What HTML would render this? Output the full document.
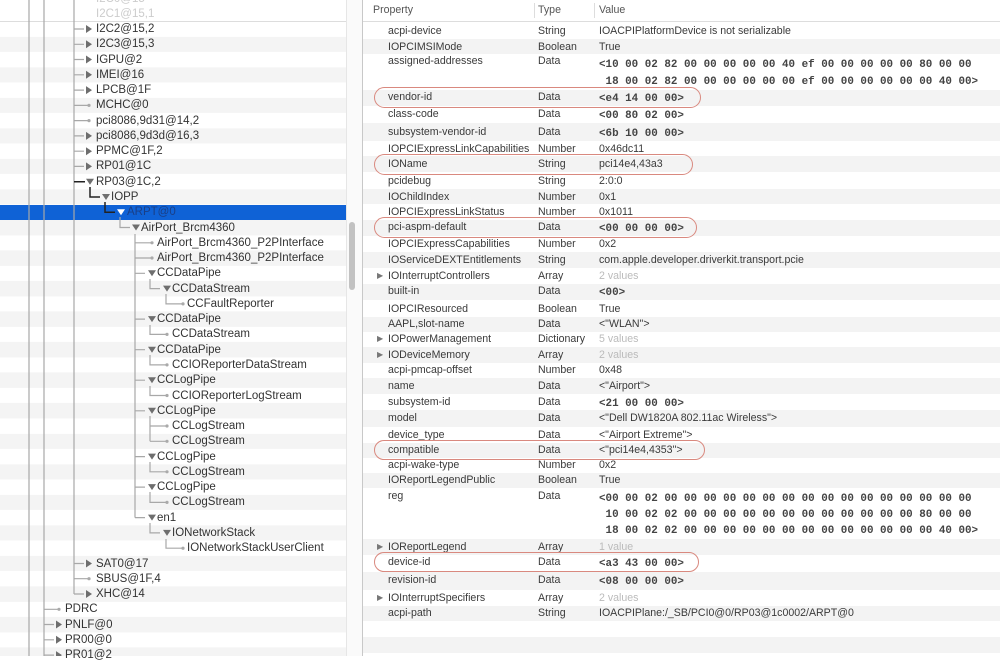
<!DOCTYPE html>
<html><head><meta charset="utf-8"><style>
*{margin:0;padding:0;box-sizing:border-box}
body{width:1000px;height:656px;overflow:hidden;background:#fff;position:relative;font-family:"Liberation Sans",sans-serif;font-size:11.5px;color:#333}
.t{position:absolute;line-height:14px;white-space:pre}
#left{position:absolute;left:0;top:0;width:346px;height:656px;background:repeating-linear-gradient(#fff 0,#fff 15.27px,#f4f4f4 15.27px,#f4f4f4 30.54px);background-position:0 21.4px}
#right{position:absolute;left:362px;top:0;width:638px;height:656px;background:#fff;border-left:1px solid #c8c8c8}
.b{position:absolute;left:0;width:638px}
.g{background:#f3f3f3}
.m{font-family:"Liberation Mono",monospace;font-size:10.9px;font-weight:bold;color:#444}
.o{position:absolute;border:1.5px solid #d9897f;border-radius:11px}
.f{color:#bbb}
svg{position:absolute;left:0;top:0}
</style></head><body>
<div id="left"></div>
<div style="position:absolute;left:0;top:0;width:346px;height:22px;background:#fff;border-bottom:1px solid #ddd"></div>
<div style="position:absolute;left:0;top:204.6px;width:346px;height:15.3px;background:#0f62d6"></div>
<div style="position:absolute;left:346px;top:0;width:16px;height:656px;background:#fafafa;border-left:1px solid #e6e6e6"></div>
<div style="position:absolute;left:349px;top:222px;width:6px;height:68px;background:#c2c2c2;border-radius:3px"></div>
<svg width="362" height="656">
<g stroke="#a8a8a8" stroke-width="1.2" fill="none">
<line x1="29" y1="0" x2="29" y2="656"/><line x1="44" y1="0" x2="44" y2="656"/>
<line x1="74" y1="0" x2="74" y2="594"/>
<line x1="135" y1="234" x2="135" y2="517.6"/>
<path d="M74 29h10M74 44.3h10M74 59.5h10M74 74.8h10M74 90.1h10M74 105.4h14M74 120.6h14M74 135.9h10M74 151.2h10M74 166.4h10M74 563.5h10M74 578.7h14M74 594h10"/>
<path d="M44 609.3h14M44 624.5h10M44 639.8h10M44 655.1h10"/>
<path d="M120 217v10.5h10"/>
<path d="M135 242.8h16M135 258h16M135 273.3h10M135 319.1h10M135 349.7h10M135 380.2h10M135 410.8h10M135 456.6h10M135 487.1h10M135 517.6h10"/>
<path d="M150 279v9.6h10M150 325v9.4h16M150 355v9.9h16M150 386v9.5h16M150 416v25.3M150 426h16M150 441.3h16M150 462v9.8h16M150 492v10.4h16M150 523v9.9h10"/>
<path d="M166 294v9.9h16M166 539v9.2h16"/>
</g>
<g stroke="#222" stroke-width="1.5" fill="none"><path d="M74 181.7h11M90 187v10h10M105 202v10.2h10"/></g>
<g fill="#aaa"><circle cx="89" cy="105.4" r="1.6"/><circle cx="89" cy="120.6" r="1.6"/><circle cx="89" cy="578.7" r="1.6"/><circle cx="59" cy="609.3" r="1.6"/><circle cx="152" cy="242.8" r="1.6"/><circle cx="152" cy="258" r="1.6"/><circle cx="167" cy="334.4" r="1.6"/><circle cx="167" cy="364.9" r="1.6"/><circle cx="167" cy="395.5" r="1.6"/><circle cx="167" cy="426" r="1.6"/><circle cx="167" cy="441.3" r="1.6"/><circle cx="167" cy="471.8" r="1.6"/><circle cx="167" cy="502.4" r="1.6"/><circle cx="183" cy="303.9" r="1.6"/><circle cx="183" cy="548.2" r="1.6"/></g>
<g fill="#6e6e6e">
<path d="M86 25l6 4-6 4zM86 40.3l6 4-6 4zM86 55.5l6 4-6 4zM86 70.8l6 4-6 4zM86 86.1l6 4-6 4zM86 131.9l6 4-6 4zM86 147.2l6 4-6 4zM86 162.4l6 4-6 4zM86 559.5l6 4-6 4zM86 590l6 4-6 4z"/>
<path d="M56 620.5l6 4-6 4zM56 635.8l6 4-6 4zM56 651.1l6 4-6 4z"/>
<path d="M86 178.7h8l-4 6zM102 194h8l-4 6zM132 224.5h8l-4 6zM148 270.3h8l-4 6zM148 316.1h8l-4 6zM148 346.7h8l-4 6zM148 377.2h8l-4 6zM148 407.8h8l-4 6zM148 453.6h8l-4 6zM148 484.1h8l-4 6zM148 514.6h8l-4 6zM163 285.6h8l-4 6zM163 529.9h8l-4 6z"/>
</g>
<path d="M117 209.2h8l-4 6z" fill="#fff"/>
</svg>
<div class="t" style="left:96px;top:-8px;color:#ccc">I2C0@15</div>
<div class="t" style="left:96px;top:7px;color:#ccc">I2C1@15,1</div>
<div class="t" style="left:96px;top:22px">I2C2@15,2</div>
<div class="t" style="left:96px;top:37.3px">I2C3@15,3</div>
<div class="t" style="left:96px;top:52.5px">IGPU@2</div>
<div class="t" style="left:96px;top:67.8px">IMEI@16</div>
<div class="t" style="left:96px;top:83.1px">LPCB@1F</div>
<div class="t" style="left:96px;top:98.4px">MCHC@0</div>
<div class="t" style="left:96px;top:113.6px">pci8086,9d31@14,2</div>
<div class="t" style="left:96px;top:128.9px">pci8086,9d3d@16,3</div>
<div class="t" style="left:96px;top:144.2px">PPMC@1F,2</div>
<div class="t" style="left:96px;top:159.4px">RP01@1C</div>
<div class="t" style="left:96px;top:174.7px">RP03@1C,2</div>
<div class="t" style="left:111px;top:190px">IOPP</div>
<div class="t" style="left:127px;top:205.2px;color:#1a3f86">ARPT@0</div>
<div class="t" style="left:141px;top:220.5px">AirPort_Brcm4360</div>
<div class="t" style="left:157px;top:235.8px">AirPort_Brcm4360_P2PInterface</div>
<div class="t" style="left:157px;top:251px">AirPort_Brcm4360_P2PInterface</div>
<div class="t" style="left:157px;top:266.3px">CCDataPipe</div>
<div class="t" style="left:172px;top:281.6px">CCDataStream</div>
<div class="t" style="left:187px;top:296.9px">CCFaultReporter</div>
<div class="t" style="left:157px;top:312.1px">CCDataPipe</div>
<div class="t" style="left:172px;top:327.4px">CCDataStream</div>
<div class="t" style="left:157px;top:342.7px">CCDataPipe</div>
<div class="t" style="left:172px;top:357.9px">CCIOReporterDataStream</div>
<div class="t" style="left:157px;top:373.2px">CCLogPipe</div>
<div class="t" style="left:172px;top:388.5px">CCIOReporterLogStream</div>
<div class="t" style="left:157px;top:403.8px">CCLogPipe</div>
<div class="t" style="left:172px;top:419px">CCLogStream</div>
<div class="t" style="left:172px;top:434.3px">CCLogStream</div>
<div class="t" style="left:157px;top:449.6px">CCLogPipe</div>
<div class="t" style="left:172px;top:464.8px">CCLogStream</div>
<div class="t" style="left:157px;top:480.1px">CCLogPipe</div>
<div class="t" style="left:172px;top:495.4px">CCLogStream</div>
<div class="t" style="left:157px;top:510.6px">en1</div>
<div class="t" style="left:172px;top:525.9px">IONetworkStack</div>
<div class="t" style="left:187px;top:541.2px">IONetworkStackUserClient</div>
<div class="t" style="left:96px;top:556.5px">SAT0@17</div>
<div class="t" style="left:96px;top:571.7px">SBUS@1F,4</div>
<div class="t" style="left:96px;top:587px">XHC@14</div>
<div class="t" style="left:65px;top:602.3px">PDRC</div>
<div class="t" style="left:65px;top:617.5px">PNLF@0</div>
<div class="t" style="left:65px;top:632.8px">PR00@0</div>
<div class="t" style="left:65px;top:648.1px">PR01@2</div>

<div id="right">
<div class="b" style="top:0;height:22px;border-bottom:1px solid #ddd"></div>
<div style="position:absolute;left:171px;top:3px;width:1px;height:15px;background:#ddd"></div>
<div style="position:absolute;left:231px;top:3px;width:1px;height:15px;background:#ddd"></div>
<div class="b g" style="top:38.5px;height:15.5px"></div>
<div class="b g" style="top:90px;height:15.5px"></div>
<div class="b g" style="top:123px;height:17.5px"></div>
<div class="b g" style="top:156px;height:16px"></div>
<div class="b g" style="top:189px;height:15px"></div>
<div class="b g" style="top:219.5px;height:16px"></div>
<div class="b g" style="top:252px;height:16px"></div>
<div class="b g" style="top:283.5px;height:16.5px"></div>
<div class="b g" style="top:316.5px;height:15px"></div>
<div class="b g" style="top:347px;height:15.5px"></div>
<div class="b g" style="top:378px;height:16px"></div>
<div class="b g" style="top:410px;height:16.5px"></div>
<div class="b g" style="top:442.5px;height:15px"></div>
<div class="b g" style="top:472.5px;height:15.5px"></div>
<div class="b g" style="top:539px;height:15.5px"></div>
<div class="b g" style="top:571.5px;height:18px"></div>
<div class="b g" style="top:605.5px;height:15.5px"></div>
<div class="b g" style="top:637px;height:15.5px"></div>
</div>
<div style="position:absolute;left:363px;top:0;width:637px;height:656px;color:#3a3a3a;font-size:10.6px">
<div class="t" style="left:10px;top:3px;color:#555">Property</div>
<div class="t" style="left:175px;top:3px;color:#555">Type</div>
<div class="t" style="left:236px;top:3px;color:#555">Value</div>
</div>
<div style="position:absolute;left:0;top:0;width:1000px;height:656px;font-size:10.6px;color:#3a3a3a">
<div class="t" style="left:388px;top:24px">acpi-device</div><div class="t" style="left:538px;top:24px">String</div><div class="t" style="left:599px;top:24px">IOACPIPlatformDevice is not serializable</div>
<div class="t" style="left:388px;top:39.7px">IOPCIMSIMode</div><div class="t" style="left:538px;top:39.7px">Boolean</div><div class="t" style="left:599px;top:39.7px">True</div>
<div class="t" style="left:388px;top:54px">assigned-addresses</div><div class="t" style="left:538px;top:54px">Data</div><div class="t m" style="left:599px;top:57px;line-height:17px">&lt;10 00 02 82 00 00 00 00 00 40 ef 00 00 00 00 00 80 00 00
 18 00 02 82 00 00 00 00 00 00 ef 00 00 00 00 00 00 40 00&gt;</div>
<div class="t" style="left:388px;top:90px">vendor-id</div><div class="t" style="left:538px;top:90px">Data</div><div class="t m" style="left:599px;top:92px">&lt;e4 14 00 00&gt;</div>
<div class="t" style="left:388px;top:107px">class-code</div><div class="t" style="left:538px;top:107px">Data</div><div class="t m" style="left:599px;top:109px">&lt;00 80 02 00&gt;</div>
<div class="t" style="left:388px;top:124.5px">subsystem-vendor-id</div><div class="t" style="left:538px;top:124.5px">Data</div><div class="t m" style="left:599px;top:126.5px">&lt;6b 10 00 00&gt;</div>
<div class="t" style="left:388px;top:141.5px">IOPCIExpressLinkCapabilities</div><div class="t" style="left:538px;top:142px">Number</div><div class="t" style="left:599px;top:141.5px">0x46dc11</div>
<div class="t" style="left:388px;top:157px">IOName</div><div class="t" style="left:538px;top:157px">String</div><div class="t" style="left:599px;top:157px">pci14e4,43a3</div>
<div class="t" style="left:388px;top:174px">pcidebug</div><div class="t" style="left:538px;top:174px">String</div><div class="t" style="left:599px;top:174px">2:0:0</div>
<div class="t" style="left:388px;top:190px">IOChildIndex</div><div class="t" style="left:538px;top:190px">Number</div><div class="t" style="left:599px;top:190px">0x1</div>
<div class="t" style="left:388px;top:205px">IOPCIExpressLinkStatus</div><div class="t" style="left:538px;top:205px">Number</div><div class="t" style="left:599px;top:205px">0x1011</div>
<div class="t" style="left:388px;top:220px">pci-aspm-default</div><div class="t" style="left:538px;top:220px">Data</div><div class="t m" style="left:599px;top:222px">&lt;00 00 00 00&gt;</div>
<div class="t" style="left:388px;top:237px">IOPCIExpressCapabilities</div><div class="t" style="left:538px;top:237px">Number</div><div class="t" style="left:599px;top:237px">0x2</div>
<div class="t" style="left:388px;top:253px">IOServiceDEXTEntitlements</div><div class="t" style="left:538px;top:253px">String</div><div class="t" style="left:599px;top:253px">com.apple.developer.driverkit.transport.pcie</div>
<div class="t" style="left:377px;top:269px;color:#777;font-size:8px">▶</div><div class="t" style="left:388px;top:269px">IOInterruptControllers</div><div class="t" style="left:538px;top:269px">Array</div><div class="t f" style="left:599px;top:269px">2 values</div>
<div class="t" style="left:388px;top:284px">built-in</div><div class="t" style="left:538px;top:284px">Data</div><div class="t m" style="left:599px;top:286px">&lt;00&gt;</div>
<div class="t" style="left:388px;top:302px">IOPCIResourced</div><div class="t" style="left:538px;top:302px">Boolean</div><div class="t" style="left:599px;top:302px">True</div>
<div class="t" style="left:388px;top:317px">AAPL,slot-name</div><div class="t" style="left:538px;top:317px">Data</div><div class="t" style="left:599px;top:317px">&lt;"WLAN"&gt;</div>
<div class="t" style="left:377px;top:332px;color:#777;font-size:8px">▶</div><div class="t" style="left:388px;top:332px">IOPowerManagement</div><div class="t" style="left:538px;top:332px">Dictionary</div><div class="t f" style="left:599px;top:332px">5 values</div>
<div class="t" style="left:377px;top:348px;color:#777;font-size:8px">▶</div><div class="t" style="left:388px;top:348px">IODeviceMemory</div><div class="t" style="left:538px;top:348px">Array</div><div class="t f" style="left:599px;top:348px">2 values</div>
<div class="t" style="left:388px;top:363px">acpi-pmcap-offset</div><div class="t" style="left:538px;top:363px">Number</div><div class="t" style="left:599px;top:363px">0x48</div>
<div class="t" style="left:388px;top:379px">name</div><div class="t" style="left:538px;top:379px">Data</div><div class="t" style="left:599px;top:379px">&lt;"Airport"&gt;</div>
<div class="t" style="left:388px;top:395px">subsystem-id</div><div class="t" style="left:538px;top:395px">Data</div><div class="t m" style="left:599px;top:397px">&lt;21 00 00 00&gt;</div>
<div class="t" style="left:388px;top:411px">model</div><div class="t" style="left:538px;top:411px">Data</div><div class="t" style="left:599px;top:411px">&lt;"Dell DW1820A 802.11ac Wireless"&gt;</div>
<div class="t" style="left:388px;top:428px">device_type</div><div class="t" style="left:538px;top:428px">Data</div><div class="t" style="left:599px;top:428px">&lt;"Airport Extreme"&gt;</div>
<div class="t" style="left:388px;top:443px">compatible</div><div class="t" style="left:538px;top:443px">Data</div><div class="t" style="left:599px;top:443px">&lt;"pci14e4,4353"&gt;</div>
<div class="t" style="left:388px;top:458px">acpi-wake-type</div><div class="t" style="left:538px;top:458px">Number</div><div class="t" style="left:599px;top:458px">0x2</div>
<div class="t" style="left:388px;top:473px">IOReportLegendPublic</div><div class="t" style="left:538px;top:473px">Boolean</div><div class="t" style="left:599px;top:473px">True</div>
<div class="t" style="left:388px;top:489px">reg</div><div class="t" style="left:538px;top:489px">Data</div><div class="t m" style="left:599px;top:491px;line-height:16px">&lt;00 00 02 00 00 00 00 00 00 00 00 00 00 00 00 00 00 00 00
 10 00 02 02 00 00 00 00 00 00 00 00 00 00 00 00 80 00 00
 18 00 02 02 00 00 00 00 00 00 00 00 00 00 00 00 00 40 00&gt;</div>
<div class="t" style="left:377px;top:540px;color:#777;font-size:8px">▶</div><div class="t" style="left:388px;top:540px">IOReportLegend</div><div class="t" style="left:538px;top:540px">Array</div><div class="t f" style="left:599px;top:540px">1 value</div>
<div class="t" style="left:388px;top:555px">device-id</div><div class="t" style="left:538px;top:555px">Data</div><div class="t m" style="left:599px;top:557px">&lt;a3 43 00 00&gt;</div>
<div class="t" style="left:388px;top:573px">revision-id</div><div class="t" style="left:538px;top:573px">Data</div><div class="t m" style="left:599px;top:575px">&lt;08 00 00 00&gt;</div>
<div class="t" style="left:377px;top:591px;color:#777;font-size:8px">▶</div><div class="t" style="left:388px;top:591px">IOInterruptSpecifiers</div><div class="t" style="left:538px;top:591px">Array</div><div class="t f" style="left:599px;top:591px">2 values</div>
<div class="t" style="left:388px;top:606px">acpi-path</div><div class="t" style="left:538px;top:606px">String</div><div class="t" style="left:599px;top:606px">IOACPIPlane:/_SB/PCI0@0/RP03@1c0002/ARPT@0</div>
</div>
<div class="o" style="left:374px;top:87px;width:327px;height:21px"></div>
<div class="o" style="left:374px;top:154px;width:319px;height:21px"></div>
<div class="o" style="left:374px;top:217px;width:323px;height:21px"></div>
<div class="o" style="left:374px;top:440px;width:331px;height:20px"></div>
<div class="o" style="left:374px;top:552px;width:325px;height:20px"></div>
</body></html>
